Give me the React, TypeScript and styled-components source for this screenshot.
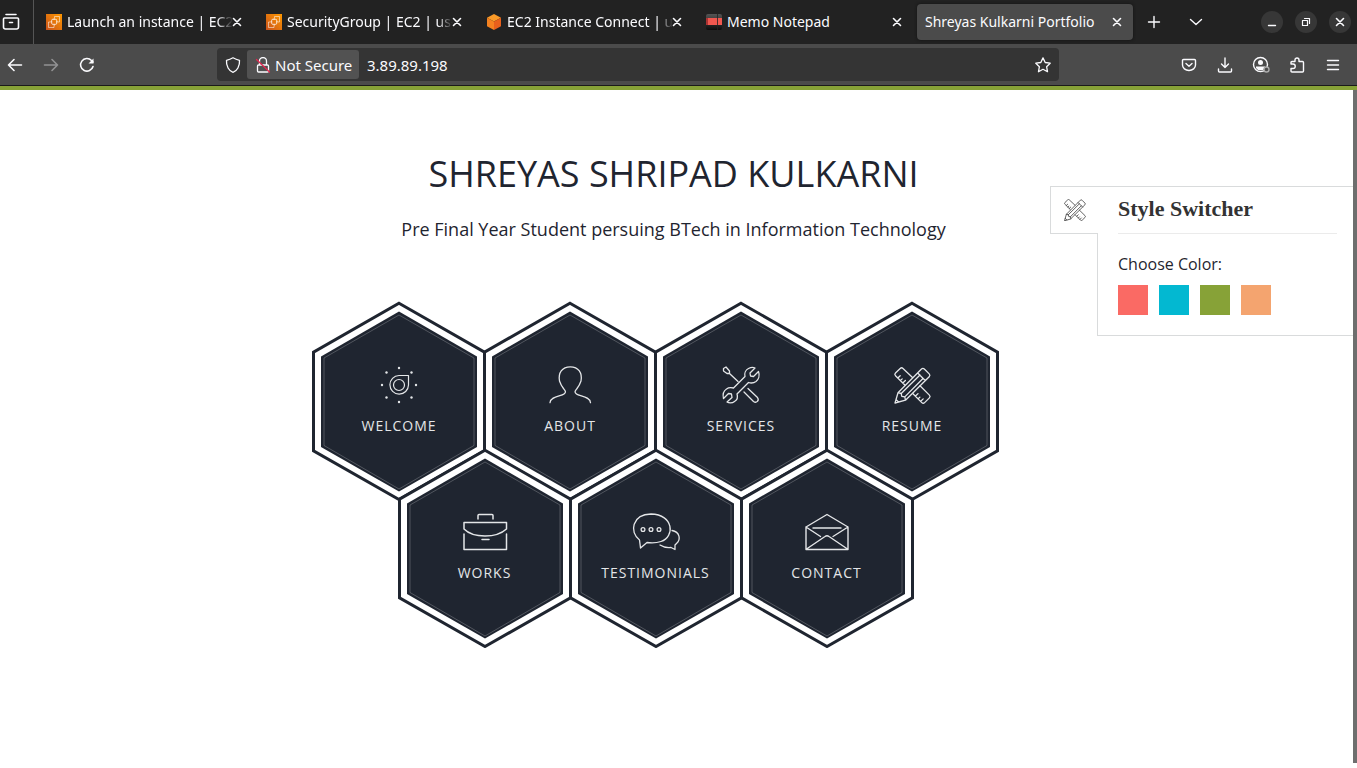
import React, { useState } from 'react';
import styled, { createGlobalStyle, css } from 'styled-components';

const ink = '#1f2530';
const line = '#d9dbdc';

const GlobalStyle = createGlobalStyle`
  *, *::before, *::after { box-sizing: border-box; }
  html, body { margin: 0; padding: 0; }
  body { background: #fff; color: ${ink}; font-family: "Open Sans", sans-serif; }
  button { font: inherit; color: inherit; border: 0; padding: 0; background: none; cursor: pointer; }
  svg { display: block; flex: none; }
`;

const Window = styled.div`
  display: flex;
  flex-direction: column;
  min-height: 100vh;
  overflow: hidden;
`;

const Chrome = styled.header`
  font-family: "Noto Sans", sans-serif;
  font-size: 14px;
  color: #fbfbfe;
  border-bottom: 1px solid #1a1a1a;
`;

const TabStrip = styled.div`
  display: flex;
  align-items: center;
  height: 44px;
  background: #222;
  padding-right: 6px;
`;

const ViewButton = styled.button`
  align-self: stretch;
  display: flex;
  align-items: center;
  width: 34px;
  padding-left: 2px;
  border-right: 1px solid #555;
`;

const Tabs = styled.nav`
  flex: 0 1 1096px;
  min-width: 0;
  display: flex;
  gap: 4px;
  margin-left: 3px;
`;

const Tab = styled.div<{ $active?: boolean }>`
  flex: 1 1 216px;
  min-width: 0;
  display: flex;
  align-items: center;
  height: 36px;
  padding: 0 8px 0 9px;
  border-radius: 4px;
  ${p => p.$active && css`
    background: #4b4b4b;
    padding-left: 8px;
    box-shadow: 0 0 3px #111;
  `}
`;

const TabLink = styled.a`
  flex: 1;
  min-width: 0;
  display: flex;
  align-items: center;
  gap: 5px;
  color: inherit;
  line-height: 18px;
  text-decoration: none;
`;

const TabTitle = styled.span<{ $fade?: boolean }>`
  flex: 1;
  overflow: hidden;
  white-space: nowrap;
  ${p => p.$fade && css`mask-image: linear-gradient(to left, transparent, #000 16px);`}
`;

const CloseButton = styled.button`
  flex: none;
  width: 16px;
  height: 16px;
  margin-left: -4px;
`;

const StripButton = styled.button`
  display: flex;
  align-items: center;
  justify-content: center;
  width: 42px;
  height: 36px;
`;

const WindowControls = styled.div`
  display: flex;
  gap: 12px;
  margin-left: auto;
`;

const ControlButton = styled.button`
  width: 22px;
  height: 22px;
  border-radius: 50%;
  background: #373737;
`;

const Toolbar = styled.div`
  display: flex;
  align-items: center;
  height: 41px;
  background: #4b4b4b;
  padding-right: 9px;
  font-size: 15px;
`;

const NavGroup = styled.div`
  display: flex;
  gap: 6px;
`;

const NavButton = styled.button`
  display: flex;
  align-items: center;
  justify-content: center;
  width: 30px;
  height: 32px;
  &:disabled { opacity: 0.4; }
`;

const Spacer = styled.div`
  flex: 0 1 115px;
`;

const AddressBar = styled.form`
  flex: 1 0 320px;
  display: flex;
  align-items: center;
  height: 33px;
  padding: 0 8px;
  border-radius: 4px;
  background: #343434;
`;

const SecurityChip = styled.button`
  display: flex;
  align-items: center;
  gap: 4px;
  height: 29px;
  width: 112px;
  margin-left: 6px;
  padding-left: 8px;
  border-radius: 3px;
  background: #525252;
  white-space: nowrap;
`;

const AddressInput = styled.input`
  flex: 1;
  min-width: 0;
  border: 0;
  outline: 0;
  padding: 0 8px;
  background: none;
  color: #fbfbfe;
  font: inherit;
`;

const Page = styled.main`
  position: relative;
  flex: 1;
  display: flex;
  flex-direction: column;
  align-items: center;
  border-top: 4px solid #87a237;
  padding: 56px 10px 40px 0;
`;

const Name = styled.h1`
  margin: 0;
  font-size: 36px;
  font-weight: 400;
  line-height: 56px;
  text-align: center;
`;

const Tagline = styled.p`
  margin: 14px 0 0;
  font-size: 18px;
  line-height: 26px;
  text-align: center;
`;

const Menu = styled.nav`
  display: flex;
  flex-direction: column;
  align-items: center;
  margin-top: 59px;
  padding-right: 36px;
`;

const MenuRow = styled.div`
  display: flex;
  & + & { margin-top: -53px; }
`;

const HexLink = styled.a`
  display: grid;
  width: 174px;
  height: 200px;
  color: #e4e6e8;
  text-decoration: none;
  & + & { margin-left: -3px; }
  & > * { grid-area: 1 / 1; }
`;

const HexFace = styled.div`
  display: flex;
  flex-direction: column;
  align-items: center;
  padding-top: 59px;
`;

const HexLabel = styled.span`
  margin-top: 6px;
  font-size: 14px;
  line-height: 20px;
  letter-spacing: 1px;
`;

const Switcher = styled.aside`
  position: absolute;
  top: 96px;
  right: 0;
  display: flex;
  align-items: flex-start;
`;

const SwitcherToggle = styled.button`
  display: flex;
  align-items: center;
  justify-content: center;
  width: 48px;
  height: 48px;
  margin-right: -1px;
  z-index: 1;
  background: #fff;
  color: #444;
  border: 1px solid ${line};
  border-right: 0;
`;

const SwitcherPanel = styled.div`
  width: 260px;
  padding: 0 20px 20px;
  background: #fff;
  border: 1px solid ${line};
  border-right: 0;
`;

const SwitcherTitle = styled.h2`
  margin: 0 0 20px;
  height: 47px;
  border-bottom: 1px solid #ebebeb;
  font-family: "Liberation Serif", serif;
  font-size: 22px;
  font-weight: 700;
  line-height: 44px;
  color: #333;
`;

const SwitcherCaption = styled.p`
  margin: 0 0 11px;
  font-size: 16px;
  line-height: 20px;
`;

const Swatches = styled.div`
  display: flex;
  gap: 11px;
`;

const Swatch = styled.button<{ $color: string }>`
  width: 30px;
  height: 30px;
  background: ${p => p.$color};
`;

const Scrollbar = styled.div`
  position: absolute;
  top: 0;
  right: 0;
  bottom: 5px;
  width: 4px;
  background: #6e6e6e;
`;

const Stroke: React.FC<{ size?: number; w?: number; box?: string; children: React.ReactNode }> =
  ({ size = 16, w = 1.3, box = '0 0 16 16', children }) => (
    <svg width={size} height={size} viewBox={box} fill="none" stroke="currentColor" strokeWidth={w}
      strokeLinecap="round" strokeLinejoin="round" aria-hidden="true">{children}</svg>
  );

const Cross = () => <Stroke w={1.6}><path d="M4.5 4.5 11.5 11.5M11.5 4.5 4.5 11.5" /></Stroke>;

const AwsIcon = () => (
  <svg width="16" height="16" viewBox="0 0 16 16" fill="none" aria-hidden="true">
    <defs>
      <linearGradient id="aws" x1="0" y1="1" x2="1" y2="0">
        <stop offset="0" stopColor="#c8511b" /><stop offset="1" stopColor="#ff9900" />
      </linearGradient>
    </defs>
    <rect width="16" height="16" fill="url(#aws)" />
    <g stroke="#fff" strokeWidth="0.8">
      <path d="M4.500 8H2.500v5.500H8V12" opacity="0.65" />
      <path d="M8.500 4V2.500h5V8H12" opacity="0.65" />
      <rect x="5.700" y="5.300" width="5" height="5" rx="1" />
      <path d="M4.500 7.800h1.200M10.700 7.800H12M8.200 4v1.300M8.200 10.300V12" opacity="0.8" />
    </g>
  </svg>
);

const CubeIcon = () => (
  <svg width="16" height="16" viewBox="0 0 16 16" aria-hidden="true">
    <path d="M8 0 15 3.7 8 7.6 1 3.7Z" fill="#fa9a28" />
    <path d="M1 3.7 8 7.6V16L1 12.2Z" fill="#f58220" />
    <path d="M15 3.7 8 7.6V16l7-3.8Z" fill="#e8601c" />
  </svg>
);

const MemoIcon = () => (
  <svg width="16" height="16" viewBox="0 0 16 16" aria-hidden="true">
    <defs>
      <linearGradient id="memo" x1="0" y1="0" x2="0" y2="1">
        <stop offset="0" stopColor="#555" /><stop offset="1" stopColor="#0c0c0c" />
      </linearGradient>
    </defs>
    <rect width="16" height="16" rx="2" fill="url(#memo)" />
    <path d="M0 4h16v7H0Z" fill="#f0574f" />
    <path d="M0 4h2v7H0Z" fill="#a33" />
    <path d="M11.5 0v16" stroke="#222" strokeWidth="0.8" />
  </svg>
);

const CrossedTools = () => (
  <>
    <path d="M1 36 4 25.700 27.500 2a2 2 0 0 1 2.800 0L35.200 6.900a2 2 0 0 1 0 2.800L11.500 33.200ZM4 25.700l3.200.8.600 2.800 3 .6.700 3.300M23.700 6l7.500 7.500M7.200 26.500 26 8M10.800 29.900 29 11.500M2 32.500l2.500 2.500" />
    <path d="M18.500 10.500 9 1.500a2 2 0 0 0-2.800 0L1.500 6a2 2 0 0 0 0 2.800L10.800 18M3.800 11l2.400-2.200M6.500 13.500l1.700-1.600M8.800 16l2.600-2.500M26 18.800l9.400 9.300a2 2 0 0 1 0 2.800l-4.800 4.700a2 2 0 0 1-2.800 0L18.700 26.500M21.500 29l2.500-2.400M24.200 31.800l1.700-1.700M26.800 34.300l2.400-2.400" />
  </>
);

const icons: Record<string, React.ReactNode> = {
  welcome: (
    <Stroke size={50} w={1.2} box="0 0 50 50">
      <path d="M34.500 15.500V25a9.300 9.300 0 1 1-9.500-9.500Z" />
      <circle cx="25" cy="25" r="5.500" />
      <g fill="currentColor" stroke="none">
        {[[25, 8], [37.5, 12.5], [42, 25], [37.5, 37.5], [25, 42], [12.5, 37.5], [8, 25], [12.5, 12.5]].map(([x, y]) =>
          <circle key={`${x}-${y}`} cx={x} cy={y} r="1.2" />)}
      </g>
    </Stroke>
  ),
  about: (
    <Stroke size={50} w={1.3} box="0 0 50 50">
      <path d="M5 42.700C5.500 36 16 36.500 19 34c2.500-2 1.500-3-.5-5.500C16.500 26 15.500 24 14.500 21 13 13 17 6.900 25.300 6.900S37.500 13 36 21c-1 3-2 5-4 7.500-2 2.500-3 3.500-.5 5.500C34.500 36.500 45 36 45.500 42.700" />
    </Stroke>
  ),
  services: (
    <Stroke size={50} w={1.3} box="0 0 50 50">
      <path d="M32.500 8.500c3-1.500 5.500-1 6.500-.5l-5 5 .5 3 3 .5 5-5c1.500 4 0 8-2.500 10-2.500 1.800-5 1.800-7.500 1L21 34c1 3 0 6-2.500 7.500-2.500 2-6 1.500-7.500.5l5-4.500-.5-3.500-3-.5-5 5c-1-4 0-7.500 3-9.500 2-1.500 5-1.500 7-1L29 16.500c-.8-3 .5-6.500 3.500-8Z" />
      <path d="m7.500 8.500 2.500-1.500 3.500 4v2.500h-2.500L7.500 11ZM13.500 13.500l8.500 8M28 32l9.500 9.500c3 2 6-1 4-4L32 28.500" />
    </Stroke>
  ),
  resume: <Stroke size={50} w={1.3} box="-7 -7 50 50"><CrossedTools /></Stroke>,
  works: (
    <Stroke size={50} w={1.5} box="0 0 50 50">
      <path d="M18 12V8.500Q18 7.500 19 7.500H32q1 0 1 1V12M4 15.500H46.500V22C41 27 33 29 25 29S9 27 4 22ZM4 27V42.500H46.500V27M22 32.500h7" />
    </Stroke>
  ),
  testimonials: (
    <Stroke size={50} w={1.3} box="0 0 50 50">
      <path d="M8.500 33C-2 25 1 7.500 20 7 43 7.500 44 30 30 34.500q-6 2-14 1L9.500 41ZM41 23.500c8 1.500 9 9 4.500 13L44 38V42.500L40 40.500C35 41 32 40 29 38" />
      <circle cx="12" cy="22.500" r="1.900" /><circle cx="20" cy="22.500" r="1.900" /><circle cx="28" cy="22.500" r="1.900" />
    </Stroke>
  ),
  contact: (
    <Stroke size={50} w={1.4} box="0 0 50 50">
      <path d="M4 20 25 7.500 46 20V42.500H4ZM4 20l14.500 9.500M46 20 31 29.500M4.500 42 23 29.500q2-1.500 4 0L45.500 42M11 21H39" />
    </Stroke>
  ),
};

const Hexagon: React.FC<{ id: string; label: string }> = ({ id, label }) => (
  <HexLink href={`#${id}`}>
    <svg width="174" height="200" viewBox="0 0 174 200" aria-hidden="true">
      <path d="M87 2.200 172.500 51.200V149.800L87 198.500 1.500 149.800V51.200Z" fill="#fff" stroke={ink} strokeWidth="3" />
      <path d="M87 10.500 165 55.500V146L87 190.500 9 146V55.500Z" fill={ink} />
      <path d="M87 14 162 57V144.500L87 188 12 144.500V57Z" fill="none" stroke="#fff" strokeOpacity="0.28" strokeWidth="0.8" />
    </svg>
    <HexFace>{icons[id]}<HexLabel>{label}</HexLabel></HexFace>
  </HexLink>
);

const tabs = [
  { title: 'Launch an instance | EC2', icon: <AwsIcon />, fade: true },
  { title: 'SecurityGroup | EC2 | us-east', icon: <AwsIcon />, fade: true },
  { title: 'EC2 Instance Connect | us-east', icon: <CubeIcon />, fade: true },
  { title: 'Memo Notepad', icon: <MemoIcon /> },
  { title: 'Shreyas Kulkarni Portfolio', active: true },
];

const rows = [
  [['welcome', 'WELCOME'], ['about', 'ABOUT'], ['services', 'SERVICES'], ['resume', 'RESUME']],
  [['works', 'WORKS'], ['testimonials', 'TESTIMONIALS'], ['contact', 'CONTACT']],
];

const swatches = [['Red', '#fa6a64'], ['Blue', '#03b8d1'], ['Green', '#87a237'], ['Orange', '#f4a46f']];

export default function App() {
  const [address, setAddress] = useState('3.89.89.198');
  return (
    <>
      <GlobalStyle />
      <Window>
        <Chrome>
          <TabStrip>
            <ViewButton aria-label="Firefox View">
              <Stroke size={18} w={1.6} box="0 0 18 18"><path d="M4 1.500h10M2.500 5h13q1 0 1 1v8q0 2-2 2h-11q-2 0-2-2V6q0-1 1-1ZM7.500 9.500h3" /></Stroke>
            </ViewButton>
            <Tabs aria-label="Open tabs">
              {tabs.map(t => (
                <Tab key={t.title} $active={t.active}>
                  <TabLink href="#">{t.icon}<TabTitle $fade={t.fade}>{t.title}</TabTitle></TabLink>
                  <CloseButton aria-label={`Close ${t.title}`}><Cross /></CloseButton>
                </Tab>
              ))}
            </Tabs>
            <StripButton aria-label="New tab"><Stroke w={1.4}><path d="M8 2.500v11M2.500 8h11" /></Stroke></StripButton>
            <StripButton aria-label="List all tabs"><Stroke w={1.4}><path d="m2.500 5.500 5.500 5 5.500-5" /></Stroke></StripButton>
            <WindowControls>
              <ControlButton aria-label="Minimize"><Stroke size={22} w={1.4} box="0 0 22 22"><path d="M7.500 14.500h7" /></Stroke></ControlButton>
              <ControlButton aria-label="Restore"><Stroke size={22} w={1.2} box="0 0 22 22"><path d="M7.500 9.500h5v5h-5ZM9.500 7.500h5v5" /></Stroke></ControlButton>
              <ControlButton aria-label="Close window"><Stroke size={22} w={1.6} box="0 0 22 22"><path d="m7.500 7.500 7 7M14.500 7.500l-7 7" /></Stroke></ControlButton>
            </WindowControls>
          </TabStrip>
          <Toolbar>
            <NavGroup>
              <NavButton aria-label="Back"><Stroke w={1.6}><path d="M14.500 8h-13M7 2.500 1.500 8 7 13.500" /></Stroke></NavButton>
              <NavButton aria-label="Forward" disabled><Stroke w={1.6}><path d="M1.500 8h13M9 2.500 14.500 8 9 13.500" /></Stroke></NavButton>
              <NavButton aria-label="Reload">
                <Stroke w={1.6}><path d="M14 9.500A6.300 6.300 0 1 1 12.500 3.500L14 5" /><path d="M14.500 1.500V6.500H9.500Z" fill="currentColor" stroke="none" /></Stroke>
              </NavButton>
            </NavGroup>
            <Spacer />
            <AddressBar onSubmit={e => e.preventDefault()}>
              <Stroke><path d="M8 .8Q11 2.500 14.500 3.300C15 9 12 14 8 15.300 4 14 1 9 1.500 3.300 5 2.500 8 .8 8 .8Z" /></Stroke>
              <SecurityChip type="button">
                <Stroke><path d="M4.500 7V4a3.500 3.500 0 0 1 7 0v3M3.500 8h9q1 0 1 1v5q0 1-1 1h-9q-1 0-1-1V9q0-1 1-1Z" /><path d="m1.500 2.500 13 12.500" stroke="#e22850" /></Stroke>
                Not Secure
              </SecurityChip>
              <AddressInput aria-label="Address" value={address} onChange={e => setAddress(e.target.value)} />
              <Stroke><path d="m8 .9 2.200 4.600 5 .7-3.600 3.500.9 5L8 12.300l-4.500 2.400.9-5L.8 6.200l5-.7Z" /></Stroke>
            </AddressBar>
            <Spacer />
            <NavGroup>
              <NavButton aria-label="Pocket"><Stroke w={1.4}><path d="M2.500 2.500h11q1 0 1 1V8a6.500 5.500 0 0 1-13 0V3.500q0-1 1-1ZM5 6.500 8 9.200l3-2.700" /></Stroke></NavButton>
              <NavButton aria-label="Downloads"><Stroke w={1.4}><path d="M8 1v9.500M4.500 7 8 10.500 11.500 7M1.500 12v2q0 1 1 1h11q1 0 1-1v-2" /></Stroke></NavButton>
              <NavButton aria-label="Account">
                <Stroke size={18} w={1.4} box="0 0 18 18">
                  <circle cx="8.500" cy="8.500" r="7" /><circle cx="8.500" cy="6.500" r="2.500" fill="currentColor" stroke="none" />
                  <path d="M4 10.500h9v1.500l-2 2H6l-2-2Z" fill="currentColor" stroke="none" />
                  <circle cx="14.500" cy="13.500" r="2.500" fill="#4b4b4b" stroke="#aaa" />
                </Stroke>
              </NavButton>
              <NavButton aria-label="Extensions"><Stroke w={1.4}><path d="M2 7V5.500q0-1 1-1H6V3a2 2 0 0 1 4 0V4.500h3.500q1 0 1 1v8.500q0 1-1 1H3q-1 0-1-1V11.500H4a2 2 0 0 0 0-4.500Z" /></Stroke></NavButton>
              <NavButton aria-label="Menu"><Stroke w={1.4}><path d="M2.500 3.500h11M2.500 8h11M2.500 12.500h11" /></Stroke></NavButton>
            </NavGroup>
          </Toolbar>
        </Chrome>
        <Page>
          <Name>SHREYAS SHRIPAD KULKARNI</Name>
          <Tagline>Pre Final Year Student persuing BTech in Information Technology</Tagline>
          <Menu aria-label="Sections">
            {rows.map((row, i) => (
              <MenuRow key={i}>{row.map(([id, label]) => <Hexagon key={id} id={id} label={label} />)}</MenuRow>
            ))}
          </Menu>
          <Switcher>
            <SwitcherToggle aria-label="Toggle style switcher">
              <Stroke size={22} w={1.4} box="0 0 37 37"><CrossedTools /></Stroke>
            </SwitcherToggle>
            <SwitcherPanel>
              <SwitcherTitle>Style Switcher</SwitcherTitle>
              <SwitcherCaption>Choose Color:</SwitcherCaption>
              <Swatches>
                {swatches.map(([name, color]) => <Swatch key={name} $color={color} aria-label={name} />)}
              </Swatches>
            </SwitcherPanel>
          </Switcher>
          <Scrollbar />
        </Page>
      </Window>
    </>
  );
}
